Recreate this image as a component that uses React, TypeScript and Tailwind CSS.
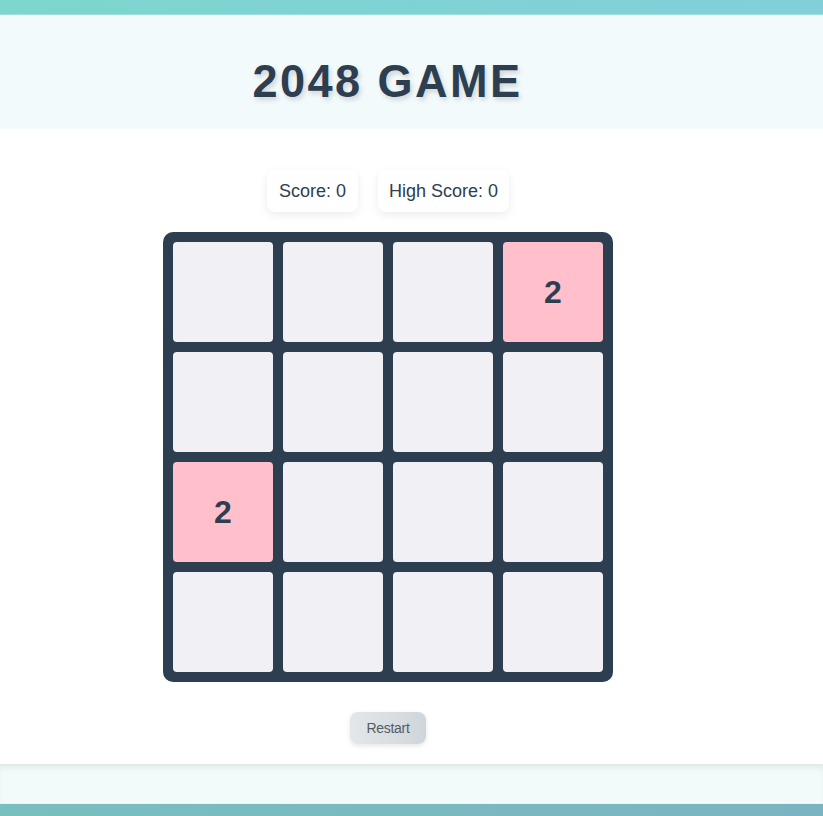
import React from 'react';

const board = [
  [0, 0, 0, 2],
  [0, 0, 0, 0],
  [2, 0, 0, 0],
  [0, 0, 0, 0],
];

const App = () => {
  return (
    <div className="min-h-[816px] pt-[14px] bg-gradient-to-r from-[#7dd6cf] to-[#82cfd9] font-['Liberation_Sans',Arial,sans-serif]">
      {/* Header */}
      <header className="h-[115px] bg-[#f3fafb] flex items-center justify-center pt-[18px] pr-[47px] border-t border-[#9fe0dc]">
        <h1 className="text-[47px] font-bold tracking-[2.5px] text-[#2c3e50] [text-shadow:2px_3px_5px_rgba(0,0,0,0.15)] scale-x-[0.96]">
          2048 GAME
        </h1>
      </header>

      {/* Main */}
      <main className="bg-white flex flex-col items-center pt-[41px] pb-[20px] pr-[47px]">
        <div className="flex gap-5">
          <div className="h-[42px] px-[12px] flex items-center bg-white rounded-lg shadow-[0_3px_10px_rgba(0,0,0,0.08)] text-[18px] text-[#2c3e50]">
            Score: 0
          </div>
          <div className="h-[42px] px-[11px] flex items-center bg-white rounded-lg shadow-[0_3px_10px_rgba(0,0,0,0.08)] text-[18px] text-[#2c3e50]">
            High Score: 0
          </div>
        </div>

        <div className="mt-5 w-[450px] h-[450px] bg-[#2c3e50] rounded-[10px] p-[10px] grid grid-cols-4 gap-[10px]">
          {board.flat().map((v, i) => (
            <div
              key={i}
              className={`w-[100px] h-[100px] rounded-[4px] flex items-center justify-center text-[32px] font-bold text-[#2c3e50] ${
                v ? 'bg-[#ffc0cb]' : 'bg-[#f0f0f5]'
              }`}
            >
              {v ? v : ''}
            </div>
          ))}
        </div>

        <button className="mt-[30px] h-[32px] px-4 rounded-lg bg-gradient-to-r from-[#e3e7ea] to-[#cfd6da] shadow-[0_2px_5px_rgba(0,0,0,0.1)] text-[14px] text-[#555c63] tracking-[-0.3px]">
          Restart
        </button>
      </main>

      {/* Footer */}
      <footer className="h-[40px] bg-[#f3fafa] shadow-[inset_0_6px_8px_-4px_rgba(0,0,0,0.1)] border-b border-[#e8f6f6]"></footer>
      <div className="h-[12px] bg-gradient-to-r from-[#78bfbf] to-[#7ab4c2]"></div>
    </div>
  );
};

export default App;
